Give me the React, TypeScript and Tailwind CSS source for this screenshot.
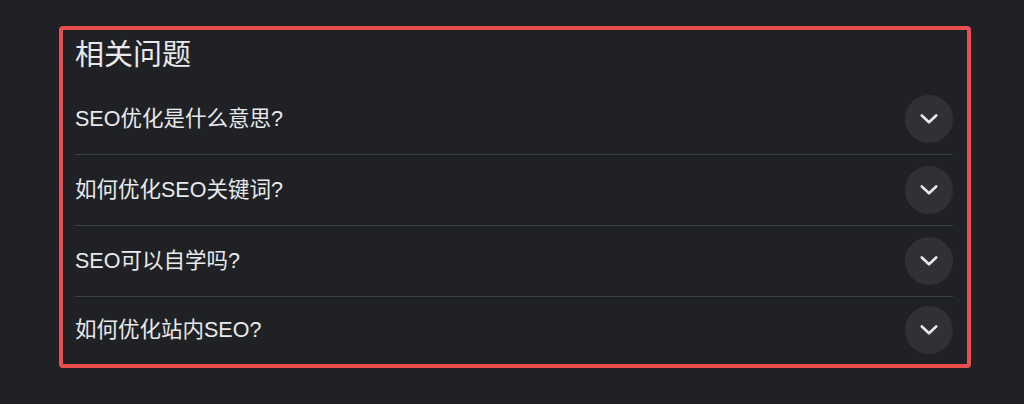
const questions = [
  "SEO优化是什么意思?",
  "如何优化SEO关键词?",
  "SEO可以自学吗?",
  "如何优化站内SEO?",
];

function Chevron() {
  return (
    <svg width="18" height="10" viewBox="0 0 18 10" fill="none">
      <polyline points="1.8,1.5 9,8.3 16.2,1.5" stroke="#e8eaed" strokeWidth="2.6" strokeLinecap="round" strokeLinejoin="round" />
    </svg>
  );
}

export default function App() {
  return (
    <div className="h-[404px] w-full bg-[#202124] pt-[26px] pl-[59px] font-['Liberation_Sans','Noto_Sans_CJK_SC',sans-serif] text-[#e8eaed]">
      <div className="h-[342px] w-[912px] overflow-hidden rounded-[4px] border-[4px] border-[#ea4f4f] pl-[12px] pr-[14px]">
        <h2 className="pt-[7px] pb-[11px] text-[29px] leading-[36px] font-normal">相关问题</h2>
        <div className="flex flex-col">
          {questions.map((q, i) => (
            <div
              key={q}
              className={
                i < questions.length - 1
                  ? "flex h-[71px] items-center justify-between border-b border-[#3c4043] pb-[1px]"
                  : "flex h-[66px] items-center justify-between"
              }
            >
              <span className="text-[21.5px] leading-[28px]">{q}</span>
              <div className="flex h-[48px] w-[48px] items-center justify-center rounded-full bg-[#303134]">
                <Chevron />
              </div>
            </div>
          ))}
        </div>
      </div>
    </div>
  );
}
